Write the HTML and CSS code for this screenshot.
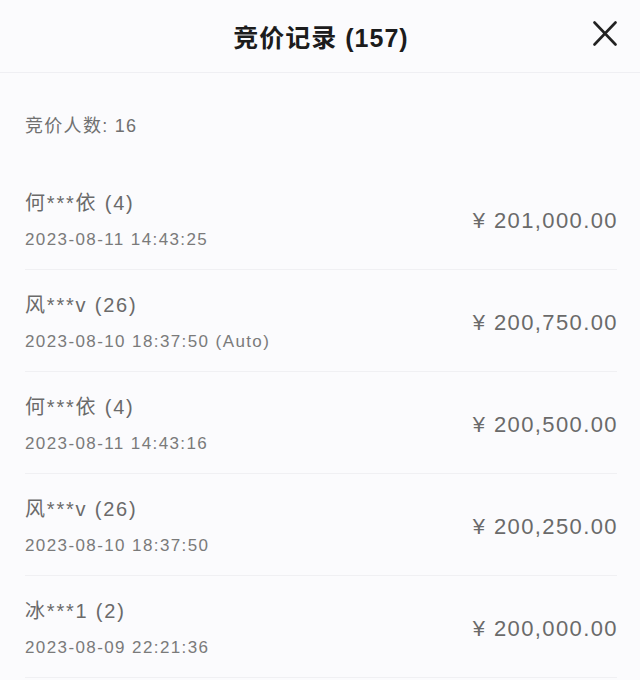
FILE: index.html
```html
<!DOCTYPE html>
<html lang="zh-CN">
<head>
    <meta charset="UTF-8">
    <meta name="viewport" content="width=device-width, initial-scale=1.0">
    <title>竞价记录</title>
    <link rel="stylesheet" href="styles.css">
</head>
<body>
    <header class="header">
        <h1 class="title">竞价记录 (157)</h1>
        <button class="close" aria-label="关闭">
            <svg width="24" height="25" viewBox="0 0 24 25">
                <path d="M1.5 1.5 L22.5 23.5 M22.5 1.5 L1.5 23.5" stroke="#222" stroke-width="2.6" stroke-linecap="round" fill="none"/>
            </svg>
        </button>
    </header>
    <div class="summary">竞价人数: 16</div>
    <ul class="bids">
        <li class="bid">
            <div class="bid-info">
                <div class="bid-name">何***依 (4)</div>
                <div class="bid-time">2023-08-11 14:43:25</div>
            </div>
            <div class="bid-price">¥ 201,000.00</div>
        </li>
        <li class="bid">
            <div class="bid-info">
                <div class="bid-name">风***v (26)</div>
                <div class="bid-time">2023-08-10 18:37:50 (Auto)</div>
            </div>
            <div class="bid-price">¥ 200,750.00</div>
        </li>
        <li class="bid">
            <div class="bid-info">
                <div class="bid-name">何***依 (4)</div>
                <div class="bid-time">2023-08-11 14:43:16</div>
            </div>
            <div class="bid-price">¥ 200,500.00</div>
        </li>
        <li class="bid">
            <div class="bid-info">
                <div class="bid-name">风***v (26)</div>
                <div class="bid-time">2023-08-10 18:37:50</div>
            </div>
            <div class="bid-price">¥ 200,250.00</div>
        </li>
        <li class="bid">
            <div class="bid-info">
                <div class="bid-name">冰***1 (2)</div>
                <div class="bid-time">2023-08-09 22:21:36</div>
            </div>
            <div class="bid-price">¥ 200,000.00</div>
        </li>
    </ul>
</body>
</html>
```

FILE: styles.css
```css
body {
    margin: 0;
    background-color: #fbfbfd;
    font-family: "Liberation Sans", "Noto Sans CJK SC", sans-serif;
    color: #666;
    overflow: hidden;
}
.header {
    position: relative;
    height: 72px;
    display: flex;
    align-items: center;
    justify-content: center;
    border-bottom: 1px solid #efeff3;
}
.title {
    margin: 0 0 0 2px;
    font-size: 25px;
    font-weight: bold;
    color: #1c1c1c;
    letter-spacing: 1px;
}
.close {
    position: absolute;
    right: 23px;
    top: 21px;
    padding: 0;
    border: none;
    background: none;
    cursor: pointer;
}
.summary {
    padding: 41px 25px 30px;
    line-height: 24px;
    font-size: 18px;
    color: #707070;
    letter-spacing: 1.3px;
}
.bids {
    list-style: none;
    margin: 0;
    padding: 0 23px 0 25px;
}
.bid {
    display: flex;
    align-items: center;
    justify-content: space-between;
    padding: 22px 0 18px;
    border-bottom: 1px solid #f0f0f3;
}
.bid-name {
    font-size: 20px;
    line-height: 26px;
    color: #6a6a6a;
    letter-spacing: 1.8px;
}
.bid-time {
    margin-top: 13px;
    font-size: 17px;
    line-height: 22px;
    color: #7a7a7a;
    letter-spacing: 1.4px;
}
.bid-price {
    font-size: 22px;
    color: #6a6a6a;
    letter-spacing: 1.4px;
    margin-right: -1px;
}
```
